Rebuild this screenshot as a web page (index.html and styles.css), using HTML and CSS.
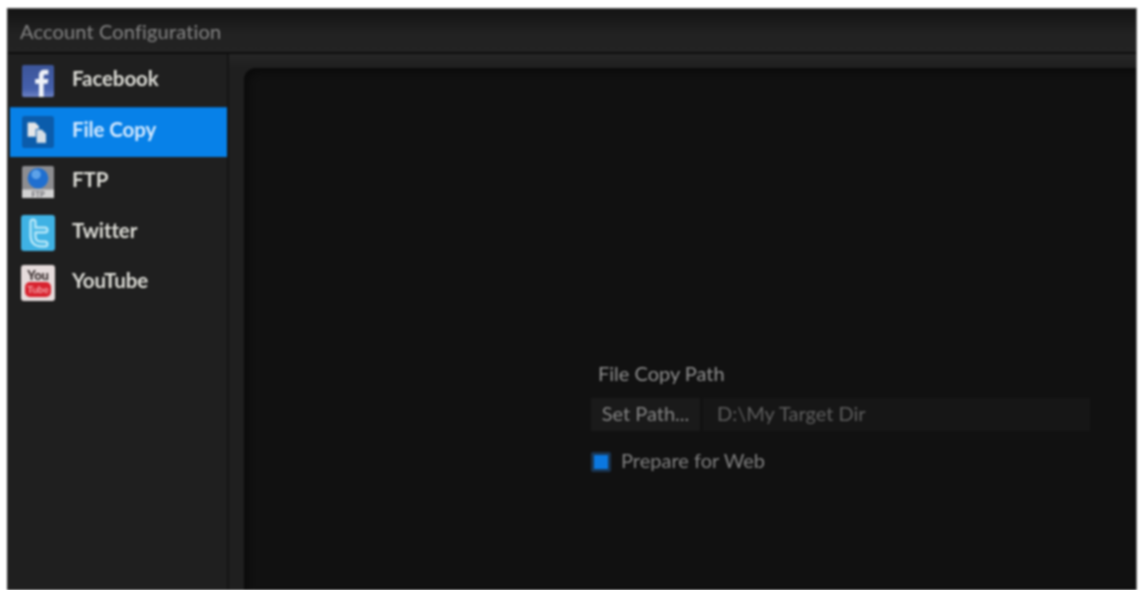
FILE: index.html
```html
<!DOCTYPE html>
<html lang="en">
<head>
    <meta charset="UTF-8">
    <meta name="viewport" content="width=device-width, initial-scale=1.0">
    <title>Account Configuration</title>
    <link rel="stylesheet" href="styles.css">
</head>
<body>
    <div class="window">
        <div class="titlebar">Account Configuration</div>
        <div class="main">
            <div class="sidebar">
                <div class="account">
                    <svg class="icon" viewBox="0 0 34 34">
                        <defs>
                            <linearGradient id="fb" x1="0" y1="0" x2="0" y2="1">
                                <stop offset="0" stop-color="#3c5599"/>
                                <stop offset="0.75" stop-color="#4560ac"/>
                                <stop offset="1" stop-color="#6c82c6"/>
                            </linearGradient>
                        </defs>
                        <rect width="34" height="34" rx="2" fill="url(#fb)"/>
                        <path d="M18 34V20h-4v-5h4v-4c0-4 2.500-6 6-6h4v5h-3c-1.500 0-2 .7-2 2v3h5l-.8 5H23v14z" fill="#eef1f8"/>
                    </svg>
                    <span>Facebook</span>
                </div>
                <div class="account active">
                    <svg class="icon" viewBox="0 0 34 34">
                        <rect width="34" height="34" rx="3" fill="#0b5cab"/>
                        <path d="M6 7h8l4 4v11H6z" fill="#e4e6e8"/>
                        <path d="M15 14h6l5 5v10H15z" fill="#d5dee6" stroke="#0b5cab"/>
                    </svg>
                    <span>File Copy</span>
                </div>
                <div class="account">
                    <svg class="icon" viewBox="0 0 34 34">
                        <rect width="34" height="34" rx="2" fill="#8d8d90"/>
                        <rect y="25" width="34" height="9" fill="#d3d3d3"/>
                        <circle cx="17" cy="13" r="11" fill="#1f6fd0"/>
                        <circle cx="15" cy="9" r="5" fill="#5da2e8"/>
                        <text class="ftp-mark" x="17" y="33">FTP</text>
                    </svg>
                    <span>FTP</span>
                </div>
                <div class="account">
                    <svg class="icon tall" viewBox="0 0 34 36">
                        <rect width="34" height="36" rx="3" fill="#3fb2e4"/>
                        <path d="M12 7v14c0 5 3 8 8 8h4M12 15h12" fill="none" stroke="#c4ecfa" stroke-width="7" stroke-linecap="round"/>
                        <path d="M12 7v14c0 5 3 8 8 8h4M12 15h12" fill="none" stroke="#4fbbe8" stroke-width="3" stroke-linecap="round"/>
                    </svg>
                    <span>Twitter</span>
                </div>
                <div class="account">
                    <svg class="icon tall" viewBox="0 0 34 36">
                        <rect width="34" height="36" rx="3" fill="#e6dcdc"/>
                        <text class="yt-mark" x="17" y="15">You</text>
                        <rect x="4" y="17" width="26" height="15" rx="5" fill="#d8232f"/>
                        <text class="tube-mark" x="17" y="28">Tube</text>
                    </svg>
                    <span>YouTube</span>
                </div>
            </div>
            <div class="content">
                <div class="panel">
                    <div class="form">
                        <div class="field-label">File Copy Path</div>
                        <div class="path-row">
                            <button class="set-path">Set Path...</button>
                            <div class="path-input">D:\My Target Dir</div>
                        </div>
                        <div class="check-row">
                            <span class="checkbox"></span>
                            <span>Prepare for Web</span>
                        </div>
                    </div>
                </div>
            </div>
        </div>
    </div>
</body>
</html>
```

FILE: styles.css
```css
/* General styles */
html, body {
    height: 100%;
}

body {
    margin: 0;
    padding: 8px 3px 0 7px;
    box-sizing: border-box;
    background-color: #fff;
    font-family: Lato, "Open Sans", sans-serif;
    overflow: hidden;
}

.window {
    height: 100%;
    display: flex;
    flex-direction: column;
    background-color: #1f1f1f;
    border-top: 1px solid #555;
    border-left: 1px solid #333;
    border-right: 1px solid #777;
    box-sizing: border-box;
    filter: blur(0.8px);
}

/* Title bar */
.titlebar {
    height: 43px;
    flex-shrink: 0;
    padding: 0 0 0 12px;
    line-height: 44px;
    font-size: 20px;
    letter-spacing: 0.15px;
    color: #858585;
    background: linear-gradient(#141414, #222 60%, #232323);
    border-bottom: 2px solid #0e0e0e;
}

.main {
    flex: 1;
    display: flex;
    min-height: 0;
}

/* Account list */
.sidebar {
    width: 219px;
    flex-shrink: 0;
    box-sizing: border-box;
    padding: 2px 0 0 2px;
    background-color: #1f1f1f;
}

.account {
    height: 50.5px;
    display: flex;
    align-items: center;
    gap: 18px;
    padding-left: 12px;
    font-size: 20.5px;
    font-weight: 700;
    letter-spacing: -0.1px;
    color: #deded8;
}

.account span {
    margin-bottom: 6px;
}

.account.active {
    background-color: #0781e8;
    color: #d5eaff;
    border-top: 1px solid #0667bb;
    box-sizing: border-box;
}

.icon {
    width: 32px;
    height: 34px;
    flex-shrink: 0;
}

.icon.tall {
    width: 34px;
    height: 36px;
    margin-left: -1px;
    margin-right: -1px;
}

.ftp-mark {
    font-size: 8px;
    font-weight: 700;
    fill: #6a6a70;
    text-anchor: middle;
}

.yt-mark {
    font-size: 13px;
    font-weight: 900;
    fill: #3a3030;
    text-anchor: middle;
}

.tube-mark {
    font-size: 10px;
    font-weight: 700;
    fill: #f3a4a8;
    text-anchor: middle;
}

/* Right side */
.content {
    flex: 1;
    display: flex;
    min-width: 0;
    padding: 14px 0 0 15px;
    border-left: 2px solid #141414;
    background: linear-gradient(#262626, #1f1f1f 14px);
}

.panel {
    flex: 1;
    border-top-left-radius: 12px;
    background-color: #111;
    box-shadow: inset 4px 4px 6px #0b0b0b;
    padding: 293px 0 0 347px;
}

.field-label {
    margin: 0 0 13px 7px;
    font-size: 20px;
    line-height: 24px;
    color: #8f8f8f;
}

.path-row {
    display: flex;
    gap: 3px;
    width: 499px;
}

.set-path {
    width: 109px;
    height: 33px;
    padding: 0 0 3px;
    border: none;
    background-color: #1a1a1a;
    color: #858585;
    font-family: inherit;
    font-size: 20px;
}

.path-input {
    flex: 1;
    padding-left: 14px;
    font-size: 20px;
    line-height: 30px;
    color: #5e5e5e;
    background-color: #161616;
}

.check-row {
    display: flex;
    align-items: center;
    gap: 10px;
    margin-top: 17px;
    font-size: 20px;
    color: #808080;
}

.check-row span:last-child {
    margin-bottom: 4px;
}

.checkbox {
    width: 14px;
    height: 14px;
    background-color: #0b78e0;
    border: 3px solid #1a3552;
    border-radius: 2px;
}
```
